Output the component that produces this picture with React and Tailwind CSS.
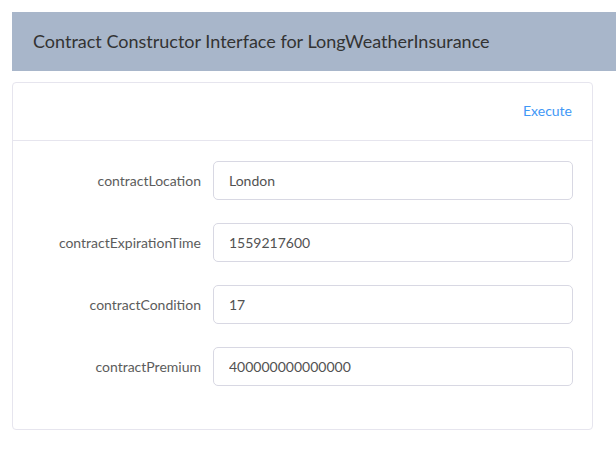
import React from "react";

const fields = [
  { name: "contractLocation", value: "London" },
  { name: "contractExpirationTime", value: "1559217600" },
  { name: "contractCondition", value: "17" },
  { name: "contractPremium", value: "400000000000000" },
];

// One labelled row of the constructor form
const FieldRow = ({ name, value }) => (
  <div className="flex items-center">
    <label className="w-[200px] shrink-0 pr-3 text-right text-[14px] text-[#5c5c5c]">{name}</label>
    <input
      type="text"
      defaultValue={value}
      className="h-[39px] w-[360px] rounded-[5px] border border-[#d8d8e3] bg-white px-[15px] text-[14px] text-[#525252] outline-none"
    />
  </div>
);

const App = () => {
  return (
    <div className="min-h-screen bg-white pt-3 pl-3 font-['Lato','Open_Sans',sans-serif]">
      {/* Page title bar */}
      <div className="flex h-[59px] items-center bg-[#a8b6ca] pl-[21px]">
        <h1 className="text-[18px] font-normal text-[#333333]">
          Contract Constructor Interface for LongWeatherInsurance
        </h1>
      </div>

      {/* Constructor card */}
      <div className="mt-[11px] w-[581px] rounded-[4px] border border-[#e6e5ee] bg-white">
        <div className="flex h-[58px] items-center justify-end border-b border-[#e6e5ee] pr-[20px] pb-[3px]">
          <button className="text-[14px] text-[#3f98f6]">Execute</button>
        </div>
        <div className="flex flex-col gap-[23px] pt-[20px] pb-[43px]">
          {fields.map((f) => (
            <FieldRow key={f.name} {...f} />
          ))}
        </div>
      </div>
    </div>
  );
};

export default App;
